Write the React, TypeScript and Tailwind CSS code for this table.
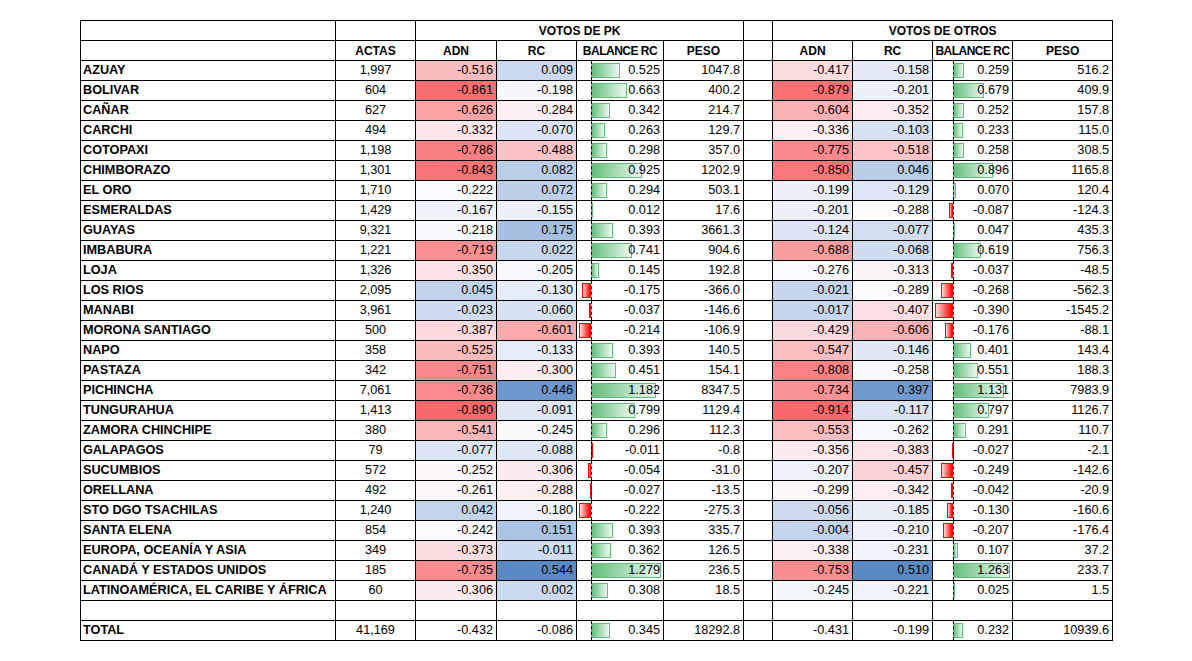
type Row = {
  name: string;
  actas: string;
  pk: [number, number, number, string];
  ot: [number, number, number, string];
};

const rows: Row[] = [
  { name: 'AZUAY', actas: '1,997', pk: [-0.516, 0.009, 0.525, '1047.8'], ot: [-0.417, -0.158, 0.259, '516.2'] },
  { name: 'BOLIVAR', actas: '604', pk: [-0.861, -0.198, 0.663, '400.2'], ot: [-0.879, -0.201, 0.679, '409.9'] },
  { name: 'CAÑAR', actas: '627', pk: [-0.626, -0.284, 0.342, '214.7'], ot: [-0.604, -0.352, 0.252, '157.8'] },
  { name: 'CARCHI', actas: '494', pk: [-0.332, -0.07, 0.263, '129.7'], ot: [-0.336, -0.103, 0.233, '115.0'] },
  { name: 'COTOPAXI', actas: '1,198', pk: [-0.786, -0.488, 0.298, '357.0'], ot: [-0.775, -0.518, 0.258, '308.5'] },
  { name: 'CHIMBORAZO', actas: '1,301', pk: [-0.843, 0.082, 0.925, '1202.9'], ot: [-0.85, 0.046, 0.896, '1165.8'] },
  { name: 'EL ORO', actas: '1,710', pk: [-0.222, 0.072, 0.294, '503.1'], ot: [-0.199, -0.129, 0.07, '120.4'] },
  { name: 'ESMERALDAS', actas: '1,429', pk: [-0.167, -0.155, 0.012, '17.6'], ot: [-0.201, -0.288, -0.087, '-124.3'] },
  { name: 'GUAYAS', actas: '9,321', pk: [-0.218, 0.175, 0.393, '3661.3'], ot: [-0.124, -0.077, 0.047, '435.3'] },
  { name: 'IMBABURA', actas: '1,221', pk: [-0.719, 0.022, 0.741, '904.6'], ot: [-0.688, -0.068, 0.619, '756.3'] },
  { name: 'LOJA', actas: '1,326', pk: [-0.35, -0.205, 0.145, '192.8'], ot: [-0.276, -0.313, -0.037, '-48.5'] },
  { name: 'LOS RIOS', actas: '2,095', pk: [0.045, -0.13, -0.175, '-366.0'], ot: [-0.021, -0.289, -0.268, '-562.3'] },
  { name: 'MANABI', actas: '3,961', pk: [-0.023, -0.06, -0.037, '-146.6'], ot: [-0.017, -0.407, -0.39, '-1545.2'] },
  { name: 'MORONA SANTIAGO', actas: '500', pk: [-0.387, -0.601, -0.214, '-106.9'], ot: [-0.429, -0.606, -0.176, '-88.1'] },
  { name: 'NAPO', actas: '358', pk: [-0.525, -0.133, 0.393, '140.5'], ot: [-0.547, -0.146, 0.401, '143.4'] },
  { name: 'PASTAZA', actas: '342', pk: [-0.751, -0.3, 0.451, '154.1'], ot: [-0.808, -0.258, 0.551, '188.3'] },
  { name: 'PICHINCHA', actas: '7,061', pk: [-0.736, 0.446, 1.182, '8347.5'], ot: [-0.734, 0.397, 1.131, '7983.9'] },
  { name: 'TUNGURAHUA', actas: '1,413', pk: [-0.89, -0.091, 0.799, '1129.4'], ot: [-0.914, -0.117, 0.797, '1126.7'] },
  { name: 'ZAMORA CHINCHIPE', actas: '380', pk: [-0.541, -0.245, 0.296, '112.3'], ot: [-0.553, -0.262, 0.291, '110.7'] },
  { name: 'GALAPAGOS', actas: '79', pk: [-0.077, -0.088, -0.011, '-0.8'], ot: [-0.356, -0.383, -0.027, '-2.1'] },
  { name: 'SUCUMBIOS', actas: '572', pk: [-0.252, -0.306, -0.054, '-31.0'], ot: [-0.207, -0.457, -0.249, '-142.6'] },
  { name: 'ORELLANA', actas: '492', pk: [-0.261, -0.288, -0.027, '-13.5'], ot: [-0.299, -0.342, -0.042, '-20.9'] },
  { name: 'STO DGO TSACHILAS', actas: '1,240', pk: [0.042, -0.18, -0.222, '-275.3'], ot: [-0.056, -0.185, -0.13, '-160.6'] },
  { name: 'SANTA ELENA', actas: '854', pk: [-0.242, 0.151, 0.393, '335.7'], ot: [-0.004, -0.21, -0.207, '-176.4'] },
  { name: 'EUROPA, OCEANÍA Y ASIA', actas: '349', pk: [-0.373, -0.011, 0.362, '126.5'], ot: [-0.338, -0.231, 0.107, '37.2'] },
  { name: 'CANADÁ Y ESTADOS UNIDOS', actas: '185', pk: [-0.735, 0.544, 1.279, '236.5'], ot: [-0.753, 0.51, 1.263, '233.7'] },
  { name: 'LATINOAMÉRICA, EL CARIBE Y ÁFRICA', actas: '60', pk: [-0.306, 0.002, 0.308, '18.5'], ot: [-0.245, -0.221, 0.025, '1.5'] },
];

const total: Row = { name: 'TOTAL', actas: '41,169', pk: [-0.432, -0.086, 0.345, '18292.8'], ot: [-0.431, -0.199, 0.232, '10939.6'] };

// excel style red - white - blue scale, midpoint at the 50th percentile
const RED = [248, 105, 107];
const WHITE = [252, 252, 255];
const BLUE = [90, 138, 198];

function makeScale(values: number[]) {
  const s = [...values].sort((a, b) => a - b);
  const min = s[0];
  const max = s[s.length - 1];
  const n = s.length;
  const mid = n % 2 ? s[(n - 1) / 2] : (s[n / 2 - 1] + s[n / 2]) / 2;
  return (v: number) => {
    let from = RED, to = WHITE, t = 0;
    if (v <= mid) t = (v - min) / (mid - min);
    else { from = WHITE; to = BLUE; t = (v - mid) / (max - mid); }
    const c = from.map((f, i) => Math.round(f + (to[i] - f) * t));
    return `rgb(${c[0]},${c[1]},${c[2]})`;
  };
}

const pkScale = makeScale(rows.flatMap((r) => [r.pk[0], r.pk[1]]));
const otScale = makeScale(rows.flatMap((r) => [r.ot[0], r.ot[1]]));

const pkBal = rows.map((r) => r.pk[2]);
const otBal = rows.map((r) => r.ot[2]);
const pkRange = { min: Math.min(...pkBal), max: Math.max(...pkBal), w: 87 };
const otRange = { min: Math.min(...otBal), max: Math.max(...otBal), w: 80 };

const cell = 'border border-black h-[20px] p-0 whitespace-nowrap';

function ColorCell({ v, color }: { v: number; color?: string }) {
  return (
    <td className={`${cell} text-right pr-[3px]`} style={color ? { background: color } : undefined}>
      {v.toFixed(3)}
    </td>
  );
}

function BarCell({ v, range }: { v: number; range: { min: number; max: number; w: number } }) {
  const inner = range.w - 5;
  const span = range.max - range.min;
  const axis = 2 + (inner * -range.min) / span;
  const len = (Math.abs(v) / span) * inner;
  const pos = v >= 0;
  return (
    <td className={`${cell} relative text-right`}>
      <div
        className={`absolute top-[2px] bottom-[2px] border ${pos ? 'border-[#63be7b]' : 'border-[#ff0000]'}`}
        style={{
          left: pos ? axis : axis - len,
          width: Math.max(len, 1),
          background: pos
            ? 'linear-gradient(to right, #63be7b, #eef8f1)'
            : 'linear-gradient(to left, #ff0000, #ffd9d9)',
        }}
      />
      <div className="absolute top-0 bottom-0 border-l border-dashed border-black" style={{ left: axis }} />
      <span className="relative pr-[3px]">{v.toFixed(3)}</span>
    </td>
  );
}

function DataRow({ r, plain }: { r: Row; plain?: boolean }) {
  return (
    <tr>
      <td className={`${cell} font-bold pl-[2px] text-left`}>{r.name}</td>
      <td className={`${cell} text-center`}>{r.actas}</td>
      <ColorCell v={r.pk[0]} color={plain ? undefined : pkScale(r.pk[0])} />
      <ColorCell v={r.pk[1]} color={plain ? undefined : pkScale(r.pk[1])} />
      <BarCell v={r.pk[2]} range={pkRange} />
      <td className={`${cell} text-right pr-[3px]`}>{r.pk[3]}</td>
      <td className={cell}></td>
      <ColorCell v={r.ot[0]} color={plain ? undefined : otScale(r.ot[0])} />
      <ColorCell v={r.ot[1]} color={plain ? undefined : otScale(r.ot[1])} />
      <BarCell v={r.ot[2]} range={otRange} />
      <td className={`${cell} text-right pr-[3px]`}>{r.ot[3]}</td>
    </tr>
  );
}

function Head({ text }: { text: string }) {
  return (
    <td className={`${cell} text-center text-[12px] ${text === 'BALANCE RC' ? 'tracking-[-0.5px]' : ''}`}>{text}</td>
  );
}

export default function App() {
  const widths = ['w-[255px]', 'w-[80px]', 'w-[81px]', 'w-[80px]', 'w-[87px]', 'w-[80px]', 'w-[29px]', 'w-[80px]', 'w-[80px]', 'w-[80px]', 'w-[100px]'];
  const heads = ['ACTAS', 'ADN', 'RC', 'BALANCE RC', 'PESO'];
  return (
    <div className="min-h-screen bg-white pl-[80px] pt-[20px] font-['Liberation_Sans',Arial,sans-serif] text-[12.7px] leading-none text-black">
      <table className="table-fixed border-collapse w-[1032px]">
        <colgroup>
          {widths.map((w, i) => (
            <col key={i} className={w} />
          ))}
        </colgroup>
        <tbody>
          <tr className="font-bold">
            <td className={cell}></td>
            <td className={cell}></td>
            <td colSpan={4} className={`${cell} text-center text-[12px]`}>VOTOS DE PK</td>
            <td className={cell}></td>
            <td colSpan={4} className={`${cell} text-center text-[12px]`}>VOTOS DE OTROS</td>
          </tr>
          <tr className="font-bold">
            <td className={cell}></td>
            {heads.map((h) => (
              <Head key={'a' + h} text={h} />
            ))}
            <td className={cell}></td>
            {heads.slice(1).map((h) => (
              <Head key={'b' + h} text={h} />
            ))}
          </tr>
          {rows.map((r) => (
            <DataRow key={r.name} r={r} />
          ))}
          <tr>
            {widths.map((w, i) => (
              <td key={i} className={cell}></td>
            ))}
          </tr>
          <DataRow r={total} plain />
        </tbody>
      </table>
    </div>
  );
}
